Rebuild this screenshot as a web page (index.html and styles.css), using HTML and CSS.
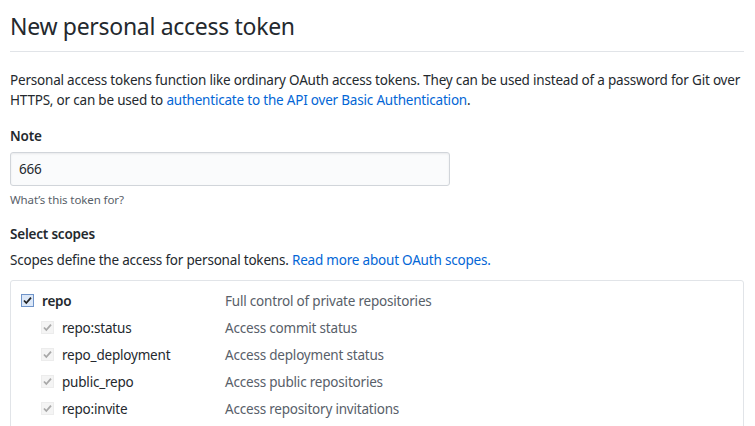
FILE: index.html
```html
<!DOCTYPE html>
<html>
<head>
<meta charset="utf-8">
<link rel="stylesheet" href="styles.css">
</head>
<body>
<div class="page">
  <div class="subhead"><h2 class="subhead-heading">New personal access token</h2></div>
  <p class="intro">Personal access tokens function like ordinary OAuth access tokens. They can be used instead of a password for Git over HTTPS, or can be used to <a href="#">authenticate to the API over Basic Authentication</a>.</p>
  <div class="form-group">
    <label class="label">Note</label>
    <div class="input">666</div>
    <p class="note">What’s this token for?</p>
  </div>
  <div class="form-group scopes-group">
    <label class="label">Select scopes</label>
    <p class="scopes-desc">Scopes define the access for personal tokens. <a href="#">Read more about OAuth scopes.</a></p>
    <div class="scopes-box">
      <div class="scope-row parent">
        <span class="check">
          <svg width="13" height="13" viewBox="0 0 13 13"><rect x="0.5" y="0.5" width="12" height="12" fill="#dce8f8" stroke="#6f94c9"/><path d="M3 6.5 L5.3 9 L10 3.6" fill="none" stroke="#222" stroke-width="1.8"/></svg>
        </span>
        <span class="scope-name bold">repo</span>
        <span class="scope-desc">Full control of private repositories</span>
      </div>
      <div class="scope-row child">
        <span class="check"><svg width="13" height="13" viewBox="0 0 13 13"><rect x="0.5" y="0.5" width="12" height="12" fill="#f4f4f4" stroke="#ececec"/><path d="M3 6.5 L5.3 9 L10 3.6" fill="none" stroke="#a8a8a8" stroke-width="1.8"/></svg></span>
        <span class="scope-name">repo:status</span>
        <span class="scope-desc">Access commit status</span>
      </div>
      <div class="scope-row child">
        <span class="check"><svg width="13" height="13" viewBox="0 0 13 13"><rect x="0.5" y="0.5" width="12" height="12" fill="#f4f4f4" stroke="#ececec"/><path d="M3 6.5 L5.3 9 L10 3.6" fill="none" stroke="#a8a8a8" stroke-width="1.8"/></svg></span>
        <span class="scope-name">repo_deployment</span>
        <span class="scope-desc">Access deployment status</span>
      </div>
      <div class="scope-row child">
        <span class="check"><svg width="13" height="13" viewBox="0 0 13 13"><rect x="0.5" y="0.5" width="12" height="12" fill="#f4f4f4" stroke="#ececec"/><path d="M3 6.5 L5.3 9 L10 3.6" fill="none" stroke="#a8a8a8" stroke-width="1.8"/></svg></span>
        <span class="scope-name">public_repo</span>
        <span class="scope-desc">Access public repositories</span>
      </div>
      <div class="scope-row child">
        <span class="check"><svg width="13" height="13" viewBox="0 0 13 13"><rect x="0.5" y="0.5" width="12" height="12" fill="#f4f4f4" stroke="#ececec"/><path d="M3 6.5 L5.3 9 L10 3.6" fill="none" stroke="#a8a8a8" stroke-width="1.8"/></svg></span>
        <span class="scope-name">repo:invite</span>
        <span class="scope-desc">Access repository invitations</span>
      </div>
    </div>
  </div>
</div>
</body>
</html>
```

FILE: styles.css
```css
html, body { margin: 0; padding: 0; background: #fff; }
body {
  font-family: "Noto Sans", "Open Sans", sans-serif;
  font-size: 13.5px;
  letter-spacing: -0.2px;
  line-height: 20px;
  color: #24292e;
  overflow: hidden;
}
a { color: #0366d6; text-decoration: none; }
.page { padding: 0 11px 0 10px; }
.subhead {
  padding-top: 9px;
  padding-bottom: 8px;
  border-bottom: 1px solid #e1e4e8;
  margin-bottom: 18px;
}
.subhead-heading { margin: 0; font-size: 23px; letter-spacing: -0.3px; font-weight: 400; line-height: 34px; }
.intro { margin: 0 0 16px; }
.form-group { margin: 0 0 15px; }
.label { display: block; font-weight: 600; margin-bottom: 6px; }
.input {
  width: 440px;
  box-sizing: border-box;
  height: 34px;
  padding: 6px 8px;
  line-height: 20px;
  background: #fafbfc;
  border: 1px solid #d1d5da;
  border-radius: 3px;
  box-shadow: inset 0 1px 2px rgba(27,31,35,.075);
}
.note { margin: 5px 0 0; font-size: 11.5px; line-height: 18px; letter-spacing: -0.1px; color: #586069; }
.scopes-desc { margin: 1px 0 10px; }
.scopes-box {
  border: 1px solid #e1e4e8;
  border-radius: 3px;
  padding: 6px 10px;
  height: 200px;
}
.scope-row { display: flex; align-items: center; height: 27px; }
.check { display: flex; width: 13px; height: 13px; margin-right: 8px; }
.child { padding-left: 20px; }
.scope-name { width: 183px; }
.child .scope-name { width: 163px; }
.bold { font-weight: 600; }
.scope-desc { color: #586069; }
```
